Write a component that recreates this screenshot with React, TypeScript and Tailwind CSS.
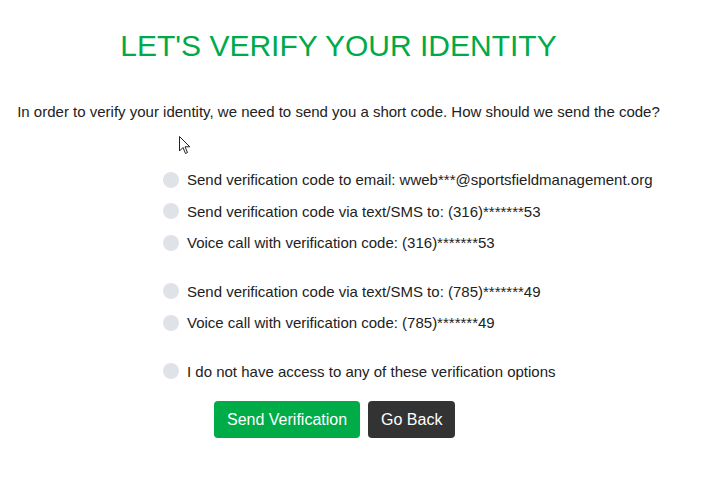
import React, { useState } from 'react';

// verification option groups; a gap sits between each group
const groups = [
  [
    'Send verification code to email: wweb***@sportsfieldmanagement.org',
    'Send verification code via text/SMS to: (316)*******53',
    'Voice call with verification code: (316)*******53',
  ],
  [
    'Send verification code via text/SMS to: (785)*******49',
    'Voice call with verification code: (785)*******49',
  ],
  ['I do not have access to any of these verification options'],
];

function Option({ label, checked, onPick }: { label: string; checked: boolean; onPick: () => void }) {
  return (
    <label className="flex h-[31.5px] items-center cursor-pointer" onClick={onPick}>
      <span
        className={`mr-[8px] h-[16px] w-[16px] flex-shrink-0 rounded-full ${checked ? 'bg-[#00ac47]' : 'bg-[#dfe2e7]'}`}
      />
      <span className="text-[15px] leading-[17px] text-[#222]">{label}</span>
    </label>
  );
}

export default function App() {
  const [picked, setPicked] = useState<string | null>(null);

  return (
    <div className="relative h-[480px] w-[716px] bg-white font-['Liberation_Sans',Arial,sans-serif]">
      <div className="w-[677px] text-center">
        <h1 className="pt-[29px] text-[30px] leading-[34px] text-[#00aa48]">LET'S VERIFY YOUR IDENTITY</h1>
        <p className="mt-[40px] text-[15px] leading-[17px] text-[#222]">
          In order to verify your identity, we need to send you a short code. How should we send the code?
        </p>
      </div>

      <div className="mt-[44px] flex flex-col gap-[17px] pl-[163px]">
        {groups.map((g, i) => (
          <div key={i} className="flex flex-col">
            {g.map((label) => (
              <Option key={label} label={label} checked={picked === label} onPick={() => setPicked(label)} />
            ))}
          </div>
        ))}
      </div>

      <div className="mt-[14px] flex gap-[8px] pl-[214px]">
        <button className="h-[37px] rounded-[4px] bg-[#00ac47] px-[13px] text-[16px] text-white">Send Verification</button>
        <button className="h-[37px] rounded-[4px] bg-[#333333] px-[13px] text-[16px] text-white">Go Back</button>
      </div>

      {/* mouse pointer caught in the screenshot */}
      <svg className="absolute left-[179px] top-[136px]" width="12" height="19" viewBox="0 0 12 19">
        <path d="M0.5 0.5 L0.5 15 L4 11.5 L6.5 17.5 L8.5 16.5 L6 10.8 L10.8 10.8 Z" fill="white" stroke="#222" strokeWidth="1" strokeLinejoin="round" />
      </svg>
    </div>
  );
}
